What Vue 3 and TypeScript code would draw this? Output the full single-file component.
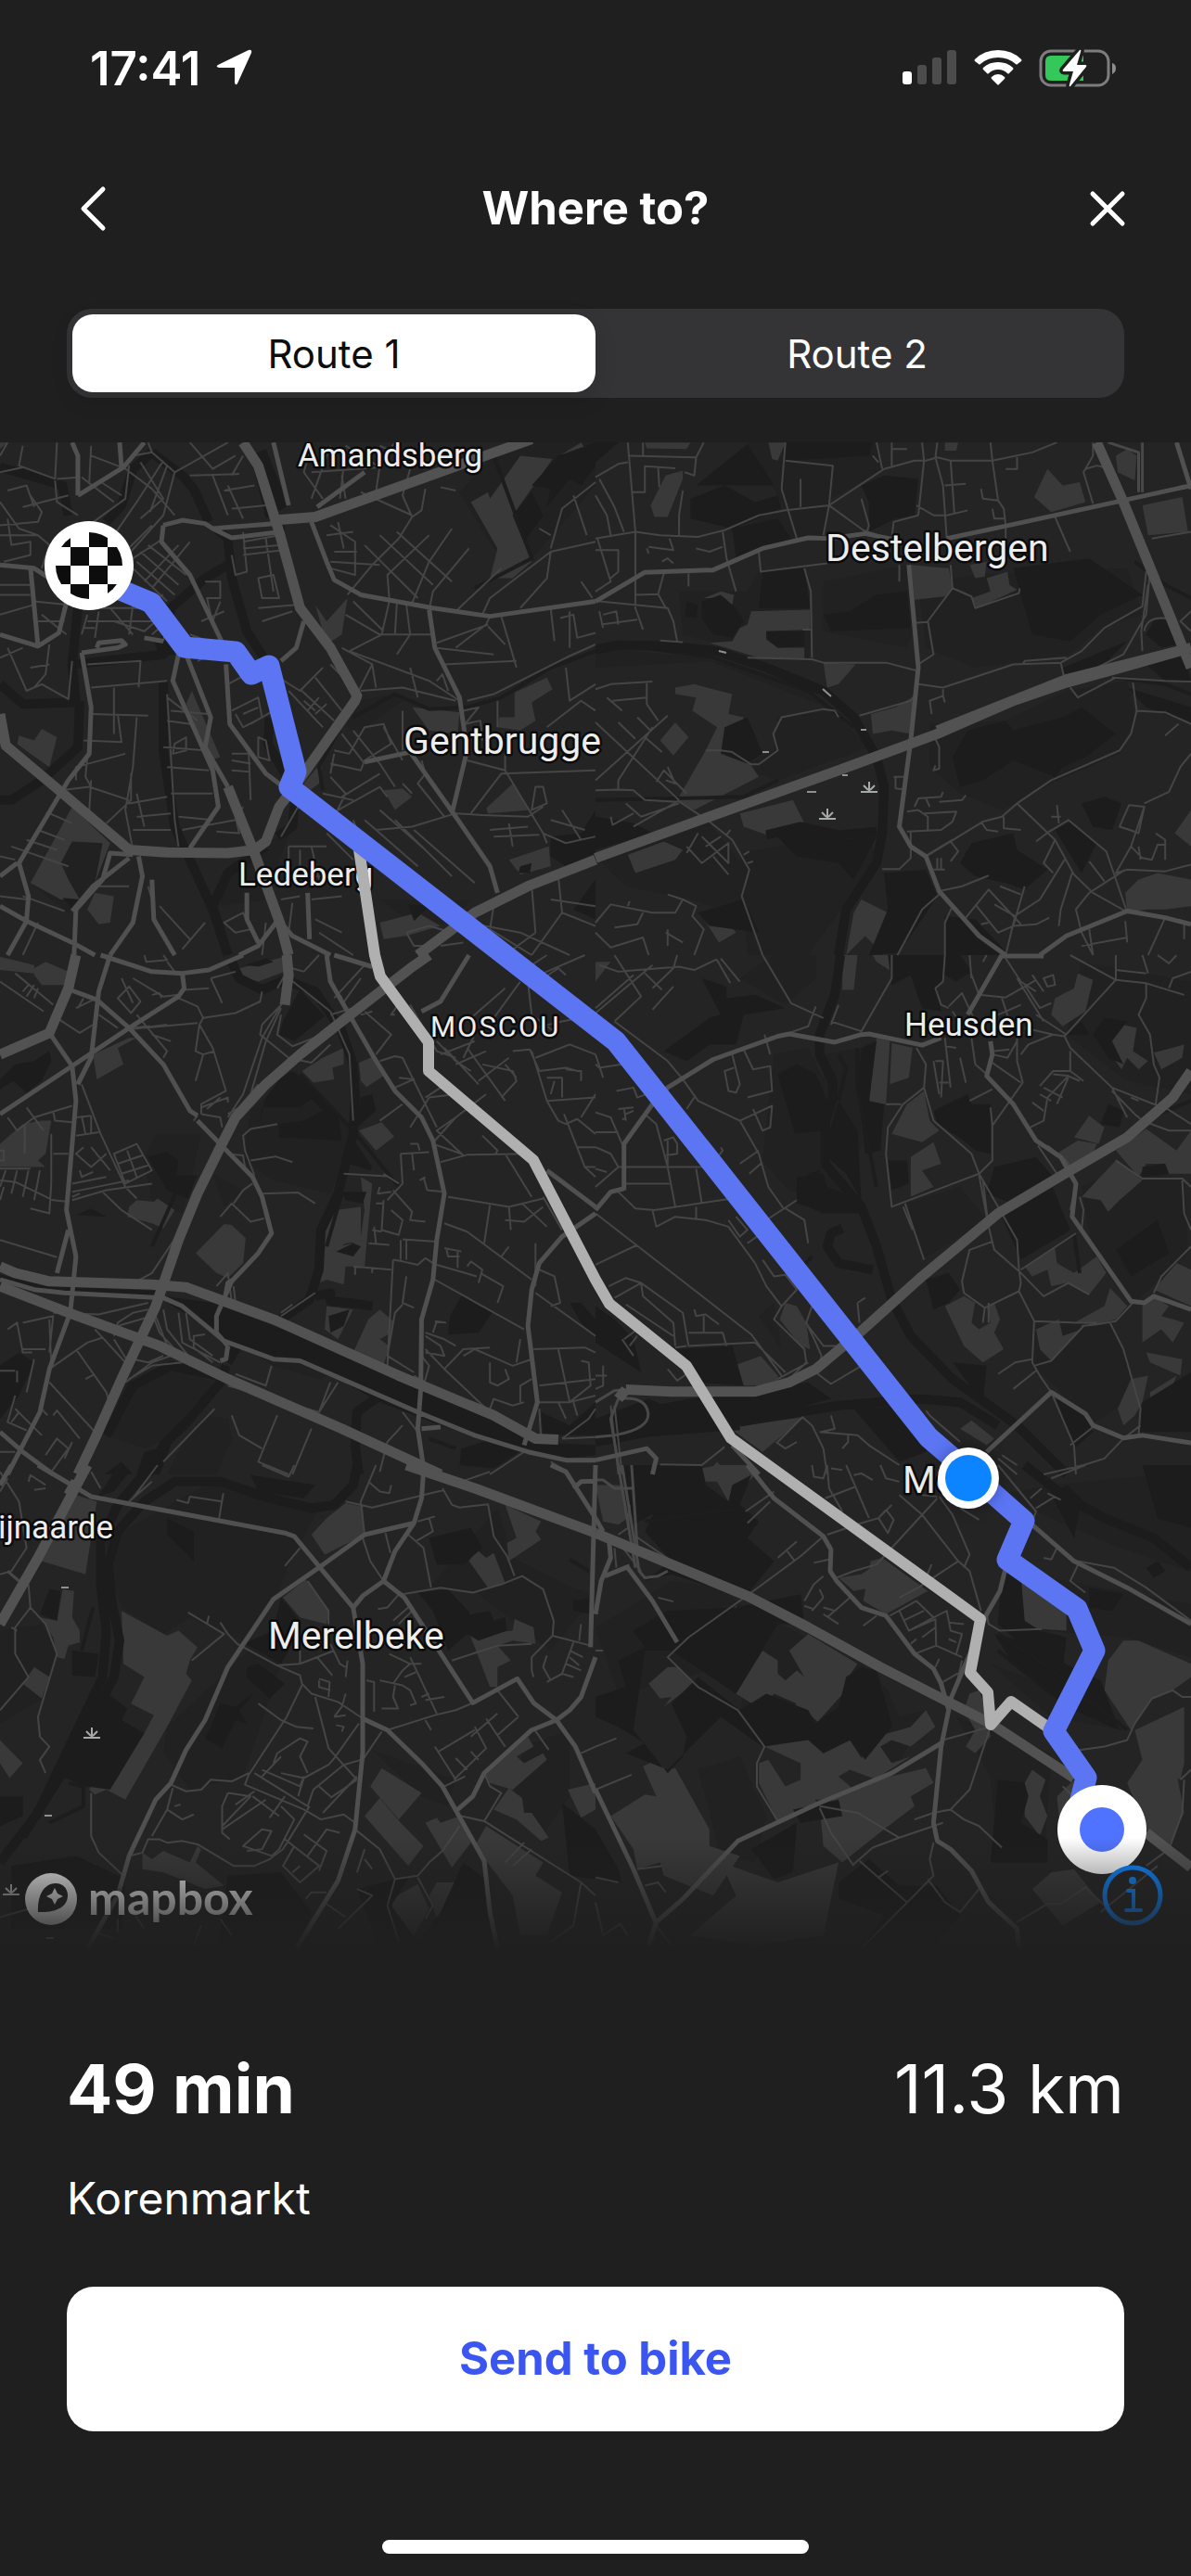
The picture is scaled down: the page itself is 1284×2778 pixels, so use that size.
<script setup lang="ts">
import { ref } from 'vue'

interface Tile {
  x: number
  y: number
  shade: string
  dark: string
  light: string
  river: string
  canal: string
  wide: string
  main: string
  mid: string
  minor: string
}

interface Place {
  name: string
  x: number
  y: number
  size: 'town' | 'village' | 'quarter'
  anchor?: 'start' | 'end'
}

const routes = ['Route 1', 'Route 2']
const selected = ref(0)

// Every tile covers 642 x 560 map units and is drawn on its own 1568 x 1568 grid.
const tiles: Tile[] = [
  {
    x: 0,
    y: 470,
    shade:
      'M1210 170L1300 60 1400 20H1568V150L1400 370 1300 340ZM80 1350L190 1120 290 1230 260 1350 180 1440ZM940 800L1040 780 1060 800 950 890 910 880ZM610 1290L700 1240 780 1150 740 1270 700 1400 580 1420ZM1000 1400L1240 1405 1160 1480 1060 1450Z',
    dark:
      'M1470 60L1568 20V90L1530 150 1500 130 1440 215 1450 160 1400 150ZM1350 240L1400 170 1430 240 1380 320ZM1450 1210L1530 1200 1568 1130V1260L1490 1300 1450 1270ZM1568 1340V1460L1510 1430ZM165 1395L210 1400 190 1425ZM1370 1300L1400 1290 1395 1320 1365 1320ZM1075 1415L1130 1420 1090 1465ZM730 265L750 270 750 290 730 290ZM405 620L445 630 465 660 420 665ZM700 40L760 210 700 250 660 60Z',
    light:
      'M1370 60L1455 70 1350 240 1400 380 1350 430 1290 430 1310 340 1240 200 1285 170 1290 190ZM1480 55L1530 20 1555 60 1500 110ZM490 810L505 770 580 970 550 980ZM50 905L90 920 110 885 150 910 130 1000 80 960 45 930ZM830 510L860 560 915 490 900 600 860 630ZM1085 820L1210 835 1205 900 1130 890ZM1355 775L1440 730 1455 765 1400 805 1410 860 1370 890 1310 880 1315 850 1355 850ZM1280 1125L1350 1050 1395 1130 1285 1140ZM1010 1070L1060 1065 1085 1090 1040 1130ZM1340 1280L1445 1240 1450 1300 1370 1325ZM190 1120L290 1230 250 1350 270 1230 190 1225 160 1290 180 1340 210 1400 160 1400 80 1350ZM250 1380L300 1390 290 1470 260 1475 230 1430ZM1000 1470L1100 1440 1160 1480 1070 1510 1010 1520ZM800 1050L850 980 840 1050 810 1075ZM0 20H20L0 40ZM1305 265L1330 290 1320 350Z',
    river:
      'M0 95L80 120 165 150 180 240M0 750L60 810 200 805 190 690 205 520M210 800L205 940 110 1040 30 1100 0 1100M190 690L430 660 450 520 540 430 600 390M570 280L600 310 610 430 650 590 700 680M710 850L705 930 770 1060M400 50L350 100 320 210 280 260M400 50L480 120 510 160 550 260M430 740L430 950 460 1180 560 1430 600 1568M600 1568L560 1420 600 1320 700 1240M780 1060L770 1180 730 1210',
    canal:
      'M930 850L1040 780 1130 825 1230 820 1320 790 1450 700 1568 650M1300 60L1400 370 1250 460M850 1070L840 1000 900 870',
    wide:
      'M0 840L15 935 150 1065 340 1250 440 1258 600 1260 670 1250 700 1225 735 1120 775 1060 935 800 940 785 870 640 790 520 735 290 680 90 640 20M720 255L830 245 1290 55 1400 10M600 1060L670 1260 740 1480 760 1568M1100 1568L1250 1440 1390 1360 1568 1280',
    main:
      'M0 390L90 400 130 430M80 395L100 635 0 600M100 635L155 595 180 480M205 180L325 95 380 20M205 180L205 60 190 20M315 20L320 95M430 270L480 255 540 265 560 280 720 265M430 270L425 320 500 420 600 660M560 280L610 308 740 290M820 260L860 380 880 435 950 480 1140 520 1290 545 1568 500M720 20L760 210M835 215L960 110M1130 525L1145 640 1210 790 1230 950 1190 1140M960 985L1080 955 1200 1150 1290 1300 1310 1380M490 660L555 850 540 940 600 1060M595 690L605 870 700 1020 740 1055M470 660L455 740 560 1010 575 1120 500 1245M215 655L310 640 330 630 320 618 260 625 255 640M215 655L240 820 235 960 180 1040 50 1290 75 1390 70 1460M350 1265L290 1260 270 1340 200 1430 195 1568M340 1275L245 1360 190 1435M365 1270L375 1330 350 1470 290 1568M400 1340L405 1460 460 1568M0 1420L70 1465 190 1530 250 1568M70 1465L20 1568M0 1330L45 1290M740 1470L770 1510 870 1568M740 1450L680 1540 630 1568M800 560L780 640 740 680M810 1380L815 1520M650 1380L650 1460 680 1530M380 610L430 620',
    mid: '',
    minor:
      'M60 30L50 90 145 130 150 20M0 110L60 95M150 130L205 125M145 135L150 200 205 240M60 215L180 180M20 165L70 150 90 215M240 30L235 140M240 60L320 95M215 125L300 200M260 135L320 180M350 60L400 50 460 110 600 20M325 95L400 160 460 240M400 50L390 20M340 90L330 190 210 290M370 80L430 190 370 250M430 75L360 200 300 300M440 90L395 230M460 110L430 240 290 420M500 20L560 100 620 60M500 120L630 115M560 120L600 240M600 150L640 250M590 165L670 150M610 220L700 210M640 60L610 120M640 290L650 410 620 420 610 360M640 320L735 300M640 340L740 330M640 360L745 345M700 310L720 470M680 430L720 420 735 490 690 490ZM690 560L770 530M680 520L780 510M820 30L800 110 850 190M870 30L820 190M910 40L895 190M820 110L1000 95 910 30M1000 30L1100 80M1000 90L990 170M900 120L910 190M1040 20L1000 80M1080 100L1060 180 1085 245M1120 160L1110 225 1085 245 1050 310 980 390 915 480M1160 155L1200 165M1085 240L950 170M870 270L935 320 935 420 870 400M860 300L930 290M890 260L905 340M880 350L940 350M870 380L1000 390M960 330L1100 490M1000 300L1140 450M1045 290L1190 440M1130 300L1020 420 1025 490M1190 280L1130 380 1085 505M1235 340L1140 470 1130 525M1320 400L1200 530M1450 350L1290 490 1270 540M1450 350L1568 320M1450 340L1480 220 1568 140M1420 280L1450 300M1450 350L1440 430 1370 520M1510 180L1545 300M1530 440L1560 490M1450 520L1460 620M1475 550L1510 540 1520 610 1568 595M1500 530L1500 640M1320 545L1360 700M1290 545L1280 570 1200 640M1285 575L1330 630M1150 625L1285 570M1145 640L1300 660M1170 690L1360 680M1025 500L1005 600 920 650M1070 510L1080 600 1045 660M1045 505L1040 600M910 540L1000 600 1140 600M930 500L1010 590M920 650L1130 740 1210 800M980 690L990 760M950 770L1060 760 1200 800M900 640L980 690 940 780M1100 790L1080 700M1150 740L1165 720 1180 770M1230 800L1300 780 1490 670M1490 670L1568 630M1490 700L1500 800 1568 750M1310 800L1310 880M1440 880L1530 800 1568 830M1220 830L1260 820 1225 870 1265 860 1270 920M0 60L20 20M0 200L50 280 100 300M20 250L30 330 80 320 80 360 10 380M0 270L100 260 110 230 80 180M0 300H100M100 300L130 330 110 400M80 450H0M0 480L80 480M90 510L0 540M100 560L170 560M90 500L180 510M110 540L175 600M230 520H430M230 560L400 560M220 580H250M230 540L215 600M260 530L250 610M350 510L340 600M290 520L350 600M320 440L400 500 430 480M300 560L380 590 410 560M350 400L440 500M360 380L460 480M370 350L470 450M390 330L490 420M400 460L500 320M380 440L470 330M350 370L430 310M330 350L400 270M400 600L440 560 430 620M0 670L60 640M20 640L70 770 110 750 180 795 190 680M60 620L100 640M130 630L120 720 90 760M80 700L130 690M240 760L440 740M230 690L370 680 365 760M240 840L390 845M220 920L320 925 310 840M240 850L225 1030 240 1060M300 760L300 900M360 850L350 1000 330 1130 350 1250M345 1020L345 1100 280 1170M340 1110L440 1090M360 1080L380 1180M360 1150L450 1140M350 1190L450 1190M240 1040L235 1130M160 1070L235 1060 340 1100M200 1040L200 1000 330 960M440 780L460 1160 470 1240M440 790L520 860M450 830L550 840M460 930L490 910 490 950 455 960ZM440 860L500 870M430 940L540 950M440 1000L550 1010M450 1080L560 1080M470 1150L560 1160M480 1190L620 1160 640 1120M620 1150L630 1200 570 1195M610 830L680 790 690 850 640 880 620 840M640 840L680 820M650 720L600 750M660 870L720 830M680 910L700 920 710 980 680 970ZM610 960L655 960 660 1100M610 980L660 990M610 1010L660 1015M700 690L720 670M720 720L790 770 850 700M760 770L850 880M790 765L880 860M830 730L900 830M870 690L930 760M800 800L830 830M810 830L840 790M830 840L860 810M880 950L920 960 960 880 1010 870 1030 930 960 980M900 900L960 990M930 890L1000 990M870 1020L880 960M870 990L950 1010 960 980M870 1030L910 1080 880 1150M900 1090L1000 1020M890 1130L1000 1060 1020 1090M930 1160L960 1250 910 1230M960 1160L1100 1300M1000 1130L1120 1250M1040 1160L1190 1330M1090 1190L1250 1350M990 1190L1085 1180 1200 1140M1010 880L1060 980M1060 830L1060 950M1110 980L1120 1020 1100 1050 1170 1150M1060 1050L1085 1080M1000 990L1040 1060M1230 980L1330 1010 1330 960M1330 1010L1430 1200 1440 1230M1200 1140L1270 1145 1390 1150 1430 1120M1240 1140L1320 1020 1568 1010M1410 1060L1400 1130 1440 1110 1430 1060ZM1290 1190L1390 1180M1300 1210L1420 1205M1340 1170L1350 1240M1430 1200L1490 1230 1568 1210M1450 1160L1540 1190M1480 1130L1530 1220M760 1240H860M760 1240L760 1330 850 1330M790 1250L790 1330M820 1240L840 1340M740 1210L800 1090M860 1200L930 1280M850 1080L930 1100M590 1470L640 1440 660 1490 620 1500ZM480 1550L540 1470M420 1420L500 1520M0 1270L40 1280M30 1240L180 1300M70 1220L150 1250M100 1190L170 1220M130 1140L190 1170M60 1390L170 1435M100 1470L60 1568M70 1400L0 1390M250 1360L340 1360M390 1360L400 1400M700 1470L690 1568M740 1400L790 1390M770 1410L760 1500M830 1460L900 1500M820 1400L900 1390M840 1500L930 1568M1070 1500L1130 1480 1190 1500 1150 1540 1090 1540 1070 1500M1160 1540L1220 1530M1230 1470L1370 1500 1500 1568M1300 1420L1290 1490 1400 1568M1400 1360L1410 1500 1330 1568M1470 1330L1480 1440 1400 1568M1450 1400L1568 1420M1480 1440L1568 1480M540 440L580 440 580 490 545 490 555 540M580 500L560 560M500 600L600 640M530 560L590 530M520 680L600 640 640 680',
  },
  {
    x: 642,
    y: 470,
    shade:
      'M430 410L550 400 570 570 560 680 430 670 300 620 230 600 220 470 400 470ZM600 440L820 390 840 570 820 640 600 590ZM850 450L1000 420 1400 400 1440 540 1330 580 1250 660 1000 700 870 640ZM880 870L1080 860 1240 770 1400 740 1420 850 1380 960 1200 1050 1070 1130 960 1080 880 1000ZM0 640L280 670 560 760 720 940 480 1040 390 1000 470 950 480 850 630 830 500 770 300 680 0 700ZM380 1260L680 1200 720 1180 740 1300 640 1440 560 1568 400 1568ZM0 1270L300 1170 390 1300 380 1450 250 1400 80 1360ZM400 20L740 20 760 100 620 190 600 300 440 330 340 280 500 220Z',
    dark:
      'M265 150L400 25 470 150ZM280 500L330 480 370 520 390 560 360 610 310 600 280 550ZM240 500L270 510 265 550 235 545ZM700 150L760 120 850 130 840 240 790 250 720 290 720 200ZM500 20H730L720 60 500 75ZM440 410L550 400 565 520 430 520ZM450 590L550 590 550 635 480 640 450 610ZM600 540L670 530 740 480 820 470 830 580 620 590ZM940 970L980 890 1080 860 1100 890 1230 850 1280 820 1370 900 1290 970 1230 1000 1210 1030 1100 980 1020 1040 960 1060ZM1450 600L1470 560 1510 550 1530 630 1490 640ZM1450 690L1550 660 1568 740 1500 740ZM1100 400L1300 370 1440 480 1330 540 1250 620 1150 600ZM1230 700L1400 620 1330 700 1240 730ZM470 1200L560 1180 650 1220 740 1210 680 1340 640 1290 530 1270ZM0 1150L100 1170 150 1200 0 1250ZM990 1230L1100 1200 1110 1250 1190 1310 1130 1370 1080 1350 1000 1330 960 1290ZM1210 1190L1250 1165 1320 1230 1280 1320ZM1280 1110L1340 1090 1385 1110 1360 1190 1310 1180ZM270 1440L390 1400 430 1500 300 1480ZM760 1320L870 1310 900 1390 800 1560 720 1568 770 1430ZM400 850L340 880 330 960 400 990 440 960ZM250 190L340 150 420 200 480 180 490 220 360 280 250 250ZM360 280L480 250 520 320 430 350 370 370ZM920 1450L1000 1460 1090 1568 920 1568ZM1400 760L1568 820V870L1450 820ZM0 20H60L0 80Z',
    light:
      'M185 120L230 105 230 130 190 245 155 245 145 210ZM130 20H250L240 40 135 38ZM455 20H500L480 75 465 70ZM285 490L330 470 365 480 360 510 330 490ZM410 530L565 525 565 585 450 590 450 615 480 640 550 640 550 675 430 670 300 625 360 620 380 580 400 570ZM600 685L685 690 640 750 610 760ZM725 840L790 820 840 785 830 900 780 890 730 900ZM210 760L260 750 360 780 350 840 390 850 360 950 290 950 320 880 255 830 265 790 210 780ZM170 920L210 865 245 910 205 965ZM290 950L360 955 410 995 430 1030 260 1130 215 1100ZM380 1140L520 1100 550 1170 450 1205 390 1180ZM85 1265L180 1225 230 1250 210 1280 105 1320ZM275 1440L320 1425 370 1500 325 1530ZM700 1400L770 1440 760 1568 710 1510 660 1568 680 1440ZM1155 185L1190 100 1230 150 1275 140 1290 200 1200 230ZM1440 210L1545 185 1560 290 1455 300ZM1370 60L1400 40 1425 60 1420 135 1375 110ZM830 390L930 400 940 460 920 485 840 495ZM990 490L1040 470 1030 430 1085 410 1090 450 1110 465 1005 520ZM985 390L1030 380 1025 425 1000 430ZM1395 1380L1430 1340 1480 1320 1568 1340V1420L1500 1430 1450 1430 1400 1440ZM1525 1200L1568 1130V1240ZM920 20H955L950 45H920Z',
    river:
      'M0 645L60 632 200 635 320 650 450 700 600 770 680 850 740 970 760 1060 755 1200 740 1290 660 1430 640 1568M450 1205L540 1180 640 1205 740 1195',
    canal:
      'M130 640L310 670 560 770 680 880M0 1100L390 1090 480 1040M1420 380L1500 450 1568 490M1370 730L1500 750 1568 780',
    wide:
      'M1320 20L1390 200 1568 700M0 1275L300 1150 640 1010 900 900 1100 800 1240 745 1400 695 1568 640M1568 640L1240 735 900 890',
    main:
      'M0 500L130 412 310 405 440 340 560 308 620 310 710 295 780 312M925 310L1090 270 1390 195 1568 150M1530 20L1568 160M825 390L850 700 830 920 800 1180 830 1240 870 1270 905 1375 1010 1510 1080 1568M1170 1568L1240 1510 1400 1435 1500 1455 1568 1475',
    mid:
      'M1440 20V170M1350 20L1430 50 1430 170',
    minor:
      'M85 20L105 290 105 520 125 585M85 60L265 65 285 20M265 65L260 120 235 110M0 125L60 85 85 80M10 130L50 215 75 290M0 180L30 240 40 300M125 20V60M165 95L168 155M130 90V170H95M130 92L210 98M230 165L220 240 220 300M0 310L105 290 170 300 270 305 340 285 430 240 500 225 615 210 760 100 840 75 870 75 900 65 935 75 1045 75 1150 50 1215 20M500 20L490 160 530 310M500 75L625 90 615 210M540 130V215M600 300L615 210 705 285 770 310M700 190L720 270 715 290M740 20L755 100M730 60L745 80M780 20V90M780 40H820M860 20L865 75 850 240M900 20L895 65 915 150 925 310M920 150L975 145M935 75L945 235M845 210L890 240 925 240 980 225M780 310L785 260 850 240M1040 20L1045 75 1060 195 1075 220 1080 270M1080 100H1110V60M1015 160L1020 190 1060 195M1045 220L1050 250H1080M1080 275V310M1210 245L1250 350M1310 20V60L1285 110 1310 205M1290 100L1320 90 1340 95M335 290L345 370 370 470M430 350L435 410 610 385M550 400L567 470 570 670M545 585H570M400 670L570 675 600 685 765 685 848 710M800 390V440M935 390L940 460 990 485 1000 520 1115 475 1117 460M940 460L875 560 890 660 850 690M840 565L875 562M850 750L915 760 1100 690 1225 685 1280 650 1340 580 1440 515 1450 410M1125 690L1130 680 1240 670M1225 685L1235 735M1460 410L1450 540 1390 660 1250 740M1440 650L1437 590 1455 450M1415 745L1425 830 1500 835 1568 870M1425 830L1410 900 1380 950 1200 1040 1110 1110 1070 1150 1020 1165 870 1270M1500 905L1535 870M1568 530L1540 560 1568 590M1370 730L1270 790 1250 760M1360 730L1500 740 1568 742M1465 310L1568 290M1445 590Q1450 550 1490 550T1530 600M15 570L110 555M10 500L190 520 205 560 215 620M170 618L230 623M105 480L165 478 185 520M165 478L180 415M245 415V455M10 530L20 580M20 540L55 530 60 570M5 310L40 440 0 470M0 345H60L60 410 40 430M135 340L140 355M140 335L205 345 195 310M175 380L190 370 205 385M265 340L300 350 335 335M0 765L40 750 150 742M135 742V810L165 860M45 800L135 790M30 790L70 830M0 865L220 1100M60 865L105 915M110 850L145 890M190 845L0 1040M130 910L175 955M150 880L60 1040 60 1065M0 1070L60 1068 100 1070 130 1100 215 1105M160 1045L180 1010 240 1080M190 1000L210 1050 185 1040M215 1100L300 1165 360 1220 405 1310 385 1390 440 1568M100 1180L215 1105M40 1150L45 1175 100 1140M80 1110L120 1150 220 1110M270 1200L240 1260M280 1210L350 1290 350 1230 280 1290 240 1240M310 1270L350 1325M290 1240L330 1210M345 1205L355 1190M390 1265L405 1255M400 1290L415 1285M0 1470L40 1415 150 1440 210 1440 230 1400 190 1385M85 1420L90 1405M50 1485L110 1475 125 1440M230 1400L265 1420 255 1450 285 1490 260 1568M185 1500L230 1530M190 1490L190 1540M0 1500L40 1545 125 1515 140 1568M290 950L330 950 360 955 410 992 430 992 480 950 468 900 490 850 600 825 630 830 640 850M695 845L830 800 843 780M885 840L880 800 915 785 920 805M915 765V790M895 915L905 940V1005L890 1010 895 995M785 1030H815M790 1030V1065L815 1068M820 1135L850 1130 875 1150V1190M840 1120L850 1095 910 1090 915 1075M870 1095L880 1120M905 1105L965 1100 975 1085M865 1140L950 1135 940 1165 910 1190 820 1195M830 1195V1275L800 1308H755M935 1225L955 1255 935 1285M870 1268L940 1220M890 1310H920M900 1275V1310M910 1275V1310M1110 1110L1210 1220 1180 1290 1205 1320M1195 1195L1245 1160 1345 1255 1400 1440M1215 1115L1220 1170M1200 1150H1225M1160 1225L1200 1190M1210 1220L1260 1325 1310 1380 1395 1435M1235 1280L1170 1400 1110 1445M1255 1320L1225 1430 1220 1480M1395 1310L1300 1380 1265 1430 1280 1500 1310 1568M1300 1285L1340 1345M905 1375L965 1360 1035 1328M975 1455L1035 1370 1120 1475M1050 1415L1105 1450M1000 1415L1060 1500 1100 1480 1130 1360M1065 1360L1120 1385M1080 1568L1105 1450M1100 1480L1160 1475 1195 1455M910 1380L860 1430 795 1568M940 1420L920 1470V1568M1015 1475L1035 1470M1380 1180L1405 1115 1445 1120 1430 1200ZM1380 1180L1420 1195M1445 1110L1510 1075 1540 1000 1568 960M1445 1120L1410 1240 1370 1320 1400 1310 1500 1315 1568 1295M1410 1240L1440 1275 1465 1280 1480 1235H1500L1500 1280M1475 1200L1500 1220V1240M1430 1240L1435 1280M1280 1540L1400 1515M1300 1490L1310 1568M1395 1465L1400 1530M1500 1455L1455 1568M1550 1470V1520M1015 1165L1030 1190 1060 1195M1075 1150L1075 1185 1120 1190',
  },
  {
    x: 0,
    y: 1030,
    shade:
      'M410 540L530 540 500 690 480 780 400 740 380 620ZM660 470L780 350 930 540 870 720 720 680 640 620ZM560 660L640 710 590 760ZM540 1390L600 1400 610 1460 570 1568 440 1568 470 1500ZM320 1300L460 1240 560 1290 500 1430 380 1490 280 1450ZM640 1180L700 1150 800 1200 900 1260 840 1280 720 1240Z',
    dark:
      'M770 350L890 480 900 560 735 550 735 510 800 500 850 470 820 435 790 460 690 460 680 515 700 430 740 370ZM745 200L790 105 855 185 775 260 735 240ZM390 610L440 595 470 620 465 665 520 665 495 735 440 710ZM0 375L40 330 90 320 130 290 135 320 110 380 70 415 35 380 0 405ZM950 430L980 420 990 470 940 520ZM915 600L935 565 980 640 975 650 920 630ZM200 785L240 765 280 790ZM430 1030L560 1050 860 1180 1120 1310 1300 1400 1400 1470 1568 1480V1510L1480 1520 1390 1490 1160 1420 1000 1350 800 1220 700 1220 600 1170 500 1090 440 1050ZM590 1090L700 1110 850 1180 900 1270 730 1160 690 1155 650 1170 600 1160ZM1185 1090L1215 1030 1295 1080 1260 1140 1180 1145ZM1215 1490L1300 1460 1380 1490 1300 1550 1210 1540ZM1425 1380L1500 1420 1568 1350V1450L1430 1450ZM1500 1050L1530 1050 1568 1100V1150L1530 1110ZM0 1240L50 1200 90 1230 50 1330 0 1400ZM380 1500L450 1480 420 1568H360ZM865 1090L920 1070 905 1120 870 1140ZM900 715H965L955 750 910 740ZM885 895L930 870 950 880 930 910ZM275 1568L320 1530 350 1568ZM645 30L700 10 720 20 680 35ZM0 965L140 1000 430 1015 420 1035 180 1020 0 990Z',
    light:
      'M90 40L120 20 180 50 180 90 110 90 90 60ZM245 300L340 250 360 250 310 280 325 330 255 375ZM0 570L60 510 110 500 135 500 120 600 100 620 120 640H0ZM340 760L360 740 405 745 415 735 460 770 430 825 400 810 335 790ZM515 900L590 812 610 815 647 855 640 930 600 975 570 960ZM795 350L850 310 905 280 905 330 875 340 880 375 825 385ZM945 325L985 305 1010 365 965 398 950 380ZM945 530L1005 505 1038 548 990 590ZM950 670L980 690 960 940 910 940 905 995 860 980 840 990 850 890 930 870 950 850 960 770ZM1000 1070L1035 1105 1030 1140 1000 1160 1025 1180 1010 1240 930 1200 970 1100ZM860 1060L930 1070 890 1160 855 1130ZM630 40L750 5 750 50 680 80 640 70ZM885 770L950 760 950 865 910 870 860 910 850 850ZM0 5L90 30 90 55 0 45Z',
    river:
      'M610 20L630 70 690 105 750 75 830 110 900 230 930 330 935 430 930 540 890 720 845 830 840 950 815 1040 740 1100M595 1240L580 1290 500 1400 430 1480 390 1568M1000 1330L940 1380 935 1480 945 1568M600 1090L630 1170 600 1230M830 1030L870 1020 870 1045 920 1050 980 1060M280 1450L350 1300 450 1240 570 1270',
    canal:
      'M900 720L860 880M790 360L930 530 1050 700M470 700L400 880M1130 1460L1200 1490',
    wide:
      'M1130 0L1080 40 900 200 790 300 700 390 620 490 580 580 520 720 470 860 410 1060 320 1280 250 1460 205 1568M0 1000L180 1080 420 1180 600 1280 900 1430 1160 1568M0 300L130 235 180 100 200 0M750 150L760 60 755 0M0 940L40 960 130 985 400 995 490 1003 720 1100 1050 1270 1300 1390 1410 1460 1470 1463',
    main:
      'M265 0L400 50 480 55 550 45 640 0M0 480L340 220 470 125 485 100 480 55M130 235L190 335 200 440 175 770 200 910 185 1080 130 1250 105 1380 20 1568M185 105L255 135 340 220 430 330 500 470 520 485M520 500L575 565 665 670 690 730 715 840 680 900 610 985 570 1090 570 1140 600 1180M290 0L260 110 240 310 205 390M180 830L150 960M0 980L90 1010 170 1020 430 1035 480 1060 590 1165 720 1220 790 1225 900 1280 1100 1380 1250 1450 1390 1500 1490 1525 1568 1525M860 0L870 80 930 200 985 310 1040 410 1110 490 1140 560 1170 720 1150 860 1140 980 1110 1100 1108 1310 1100 1430 1118 1568M880 0L980 35M1110 170L1160 140 1235 0M1440 650L1568 760M1568 780L1480 850 1420 930 1400 1010 1390 1120 1415 1350 1380 1480M600 1180L595 1220 580 1225M0 1440L60 1500 140 1568M1110 1430L1160 1425M590 1050L600 990 615 980',
    mid: '',
    minor:
      'M0 80L115 170M40 55L140 150M75 90L60 110M90 90L70 125M100 100L90 130M150 190L210 235 245 210M255 130L200 160M220 130L205 160M380 0L385 20 440 15 430 0M440 20L460 50M310 130L340 95 370 140 345 175ZM320 70L350 145M350 70L430 125 470 120M400 120L420 115 425 130M485 105L550 100M470 130L520 155 535 190 620 175 685 140 690 110M555 70L620 50M555 70L585 145M535 190L525 210 515 290 535 300 565 290M525 210L560 280 595 410 530 450 530 480M535 300L515 380M380 220L520 205M340 220L395 215M340 225L440 210M360 180L440 290 430 310M400 240L450 260M260 180L310 220M200 390L240 300M215 390L265 540 330 700 360 735M20 490L45 530 90 490 190 455M70 460L115 530M140 470L145 500 190 505M215 485L225 540M240 485L240 540M200 490L240 485M200 545L260 535M65 510V600M0 590H10V620H0M0 645H80M15 650L0 700M45 650L30 720M75 650L60 730M105 650L90 740M0 680L40 685 140 740 180 745M135 540V690L130 780 80 765M140 600H180M0 740L10 700M220 580L200 600 240 640 280 600M210 650L215 670 245 655M240 580L290 650M300 600L360 570 400 650 330 690ZM310 630L375 605M320 660L390 635M335 590L360 670M190 690L280 670M190 715L340 680M190 740L280 710 400 690M210 720L190 730M270 715L320 770 400 830M0 860L150 912M360 985L400 960 470 840M530 460L600 430 600 445M545 465L580 430M530 480L580 490 585 520M520 485L510 500M600 480L630 460 680 390M750 130L690 250 640 420 600 490M740 160L700 260 660 420M740 180L730 240 770 275 850 240M690 210L685 240 760 310 820 325 870 270M690 210L740 150M730 100L750 60 870 170 920 300 930 500M730 510L660 525 640 545 645 590 670 665M600 600L640 605 645 640M660 620L725 608 770 625M690 720L785 717 830 750M695 795L660 805 610 750 580 790M615 750L640 710 665 690M610 1045L600 960 570 1000M615 1000L620 1050M800 50L770 40M800 50L840 0M870 80L900 130M880 130L960 30M900 150L950 70M870 180L930 160M960 170L1030 240 990 300M950 180L980 170M1000 320L1040 305 1060 310 1150 520M1050 370L1090 375 1040 400M1130 430L1200 420M1120 430L1160 400M1060 450L1000 500M1080 520L1130 430M1145 560L1200 490 1280 420M1200 490L1150 530 1220 605M1140 570L1215 600M1160 625L1230 603 1390 600M1330 600L1400 730M1270 545L1310 590 1305 600M1055 600L1130 595M1055 600L1060 690 1020 740M1080 570L1100 570 1105 590M1085 600L1090 650M1105 680L1120 670M1115 670L1125 710 1170 715M1035 710L1085 775 1080 800 1120 805M1000 700L995 720 1030 715M1010 740L1005 830 1050 845 1060 800 1030 770M990 750H1010M980 830L1005 835M985 820L990 870M970 870L1025 875M1060 858L1150 865M1055 860V920M1070 860V920M1035 920L1060 925 1100 935 1120 915 1140 930M1035 920L1020 1240M930 940L1030 950M935 940V965M980 945V960M905 660L1020 668M1050 690L1010 660M1180 730L1340 760 1430 735M1290 755L1275 870M1340 760L1345 830M1330 800L1380 805 1430 760M1170 810L1230 835 1400 980M1170 885L1215 895M1175 885L1180 910H1210M1205 890V945M1150 935L1255 970M1230 940L1240 925 1270 950 1260 990M1265 960L1325 1000 1310 1050M1145 980L1380 1130M1340 880L1320 910M1375 750L1440 820M1430 730L1480 830M1410 870V1000M1420 950L1460 970 1475 1050 1450 1060M1410 1020L1568 1150M1405 1190L1540 1185 1568 1200M1420 1300L1568 1280M1470 1190L1500 1350M1415 1350H1500L1568 1330M1530 1225L1550 1230 1555 1300 1500 1350M1470 1350L1490 1400M1510 1350L1520 1390M1420 1370L1425 1470M1480 1460L1568 1455M1480 1460L1550 1400 1568 1370M1070 970L1060 1050 1090 1065M1060 1055L1040 1080 1020 1210 1090 1260M1120 1140L1170 1160 1200 1180M1150 1105L1140 1140M1145 1105L1175 1110M1120 1190L1170 1250 1290 1380M1170 1250L1220 1190 1290 1185M1220 1210L1250 1190 1290 1210 1350 1240 1400 1220M1290 1230V1290L1310 1300 1340 1280 1330 1250M1370 1160L1360 1230M1400 1280L1370 1300 1370 1350M1290 1370L1300 1340 1350 1360 1380 1350M1110 1210L1130 1240 1115 1300M1120 1200L1170 1210 1160 1180 1120 1150M1060 1380L1100 1440M1060 1420L1020 1470 1000 1560M1380 1500L1290 1568M1450 1530L1480 1550M740 1080L770 1055M750 1110L860 1160M740 1090L830 1020M600 1300L840 1380 890 1290M620 1265L700 1300 715 1240M610 1390L630 1450 690 1490M730 1390L680 1530 760 1568M820 1430L770 1568M565 1370L430 1530M840 1380L870 1290M1090 1270L1120 1290M60 1110L140 1090 130 1200M20 1130L45 1110 60 1200 85 1200M60 1190L120 1190M90 1220L70 1320M130 1250L230 1170 270 1155M200 1190L280 1320 285 1340 270 1400M225 1280L250 1265M130 1290L250 1440M40 1330L20 1410 70 1435M40 1370L110 1450M50 1380L30 1410M140 1390L150 1375 210 1460M110 1370L125 1390M120 1510L150 1460 180 1490M130 1568L180 1490M170 1520L190 1470M130 1100L135 1240M140 1080L260 1085 390 1050M250 1130L290 1180 330 1230M300 1150L310 1110 350 1080 390 1070M310 1120L400 1090M300 1160L330 1215 390 1230 430 1210M340 1280L400 1240 480 1230M410 1090L440 1180M400 1080L420 1140 500 1240M430 1070L440 1130 510 1230M470 1080L480 1170 580 1230M490 1080L500 1160 560 1210M540 1145L510 1150 510 1185 560 1230M330 1290L400 1230 450 1210M0 1255H40M45 1255V1290M0 1500L40 1500M1330 330L1360 370M1230 280L1330 440M1170 280L1260 390M1250 260L1160 300M1280 290L1200 330M1260 380L1340 310M1270 330L1350 350 1360 380 1320 430M1150 260L1200 320 1240 350M1220 310L1250 240M1350 290L1395 285 1420 350M1400 290L1440 440 1470 500 1490 510 1520 495 1568 540M1420 350L1490 340 1520 350M1440 370H1480V430M1460 380L1450 420M1490 345L1530 350 1530 380M1440 440L1568 430M1485 480L1540 640 1568 670M1520 580H1568M1300 190L1370 80M1390 80L1400 180 1470 240M1330 100L1230 200M1400 30L1440 0M1430 70L1470 40 1490 60M1420 60L1540 0M1530 490L1568 420M1540 640H1568M1410 220L1480 200 1568 180M1410 310L1500 270 1568 300M1040 180L1030 180 1060 130M1080 150L1150 290 1200 310',
  },
  {
    x: 642,
    y: 1030,
    shade:
      'M470 300L560 280 620 420 600 640 700 780 600 760 500 700 440 620ZM600 300L700 280 700 580 650 640 600 500ZM1280 20L1568 80V420L1400 380 1240 240ZM1160 1120L1300 1100 1360 1110 1430 1330 1300 1420 1210 1300 1150 1240ZM1280 700L1400 640 1550 680 1560 900 1410 1060 1310 900ZM820 750L960 700 1030 800 860 920ZM470 0H580V70L500 150 380 70ZM430 1090L490 1190 470 1050Z',
    dark:
      'M480 360L530 330 580 360 610 440 600 530 525 540ZM280 70L345 95 345 130 420 120 500 160 390 180 370 270 300 270 240 320 180 290 300 190 330 180ZM530 670L600 660 610 700 700 740 710 780 600 780 560 760 530 750ZM890 470L980 420 990 450 1040 450 1040 600 1000 590 970 560 900 510ZM640 440L690 530 700 740 660 660 600 600ZM700 280L740 260 720 440 760 450 750 590 710 600 690 380ZM870 980L930 960 960 1010 930 1050 890 1070ZM1070 790L1200 690 1250 830 1120 920ZM1370 890L1480 800 1510 900 1410 970ZM1350 450L1390 470 1380 520 1330 510ZM1440 640L1500 630 1510 660 1440 670ZM770 0H960L990 50 950 80 920 60 900 100 910 170 860 160 830 60 780 90ZM0 1060L50 1100 100 1160 120 1260 0 1170ZM210 1190L360 1180 390 1300 270 1290 240 1230ZM300 1330L560 1290 620 1340 370 1420 150 1440 100 1370ZM0 1400L140 1340 200 1370 260 1390 400 1380 180 1440 0 1470ZM680 1370L830 1360 900 1450 870 1500 800 1530ZM940 1230L1030 1240 1020 1350 980 1290ZM1340 190L1400 200 1360 260 1390 330 1350 310 1310 240ZM1050 640L1160 610 1220 690 1120 760 1030 720ZM1210 1330L1290 1390 1310 1440 1260 1490ZM770 620L820 620 825 690 780 710ZM1440 1350L1568 1260V1440H1430ZM560 660L590 650 590 720 550 700ZM1240 240L1280 200 1300 240Z',
    light:
      'M650 0H690L680 105 650 105ZM730 0H790L780 50 740 20ZM740 250L775 260 765 450 720 450ZM780 265L835 280 825 370 775 390ZM780 540L820 450 865 410 880 500 905 530 860 565ZM830 610L890 565 910 630 860 650 890 700 830 730ZM1210 130L1260 100 1270 55 1310 75 1290 170 1230 215 1200 180ZM1335 265L1370 205 1425 220 1415 290 1455 320 1430 345 1400 310 1385 345ZM1470 295L1550 270 1545 310 1490 345ZM1260 550L1300 485 1340 520 1325 570ZM1220 595L1270 560 1320 570 1300 630 1240 640ZM1280 730L1370 620 1440 680 1380 740 1350 775 1330 740ZM1370 590L1450 525 1530 590 1568 530V660L1500 660 1500 630 1450 630 1430 670ZM1130 940L1210 885 1215 930 1260 960 1320 910 1345 960 1300 1025 1240 990 1200 1000 1190 950 1150 970ZM1470 1010L1530 930 1568 950V1060L1510 1030ZM920 1060L970 1030 1000 1050 990 1110 1010 1130 1040 1110 1030 1060 1050 1050 1065 1100 1050 1140 1075 1190 1020 1230 970 1180ZM1260 1110L1340 1060 1355 1005 1400 1060 1370 1100 1320 1115ZM1160 1130L1220 1100 1230 1150 1280 1130 1200 1225 1170 1190ZM1440 1060L1470 1030 1510 1060 1490 1090 1550 1110 1520 1170 1490 1130 1440 1170ZM1450 1200L1545 1220 1540 1270 1460 1230ZM1410 1280L1455 1270 1440 1350 1420 1390 1390 1420 1375 1370ZM1460 1320L1530 1270 1510 1330 1460 1350ZM485 1100L500 1050 530 1060 555 1110 565 1190 540 1180ZM365 1240L435 1210 480 1270 480 1300H390ZM350 1425L550 1395 440 1500ZM960 1430L990 1405 1050 1460 1030 1480ZM0 20L40 20 0 80ZM290 1568L320 1530 350 1568Z',
    river:
      'M645 0L630 120 590 240 590 300 625 380 625 430 605 500 605 630 700 760 740 880 780 1040 830 1150 940 1280 1110 1420 1240 1568M730 950L640 930 610 880 620 840 650 825M380 1410L640 1360 850 1340 960 1350 1060 1420M0 1470L140 1440 380 1420',
    canal:
      'M640 300L660 340 640 440M690 280L690 400 740 700M570 910L530 960M1440 500L1568 440M1260 840L1275 960',
    wide:
      'M1568 350L1520 430 1400 550 1250 650 1060 780 860 970 700 1135 580 1250 510 1290 420 1318 200 1318 80 1312M80 1312L60 1340',
    main:
      'M1070 0L1000 140 980 180M1070 3L1180 3M75 710L75 570 150 450 190 400 310 315 480 245 510 238 630 263 700 240 720 238 860 272 910 250M1040 260L1045 300 1030 365 1100 450 1160 560 1225 610 1265 690 1255 790 1410 1045 1445 1050 1470 1030 1568 1070M0 770L40 715 75 705M1030 1500L1200 1320 1290 1385 1310 1420 1390 1458 1440 1450 1568 1473M0 1525L135 1490 160 1520 150 1568M360 1480L400 1530 430 1568',
    mid:
      'M60 1340L40 1400 60 1540 75 1568M60 1340Q130 1330 138 1380T50 1450L0 1455M0 1350L50 1315 80 1312',
    minor:
      'M50 0L120 125 50 200M0 175L150 30M10 30L60 50 220 35 260 45 320 12M150 100L205 40 215 0M130 55L175 105M205 95L150 165M100 60L0 160M320 15L355 85M330 10L380 80M440 0L515 145 600 190M580 155L560 215 510 235M780 0V70L700 230 620 200M620 210L640 150M920 0L915 80 895 100 910 150 930 160M990 60L1010 120 1080 128 1160 75M985 0L990 70M1020 20L1030 0M930 155L965 115 1000 200M940 170L960 205M1080 10L1120 80 1160 110M1110 70L1180 200M1130 90L1170 160 1200 145M1150 60L1180 110M1180 70L1205 60 1210 90 1190 95ZM1250 0L1370 75 1310 150 1235 245 1205 240 1130 220M1370 0V75L1450 85 1450 130 1430 180 1460 240 1470 330 1485 370 1475 450M1370 45L1450 55M1440 0L1455 55M1450 85L1550 120M1510 100L1520 70 1568 50M1480 0L1510 25 1530 0M1070 130L1090 200M1120 150L1040 190M1160 180L1240 240M1235 245L1250 280 1360 400 1470 450 1500 460 1568 510M1250 290L1250 350 1205 350 1170 395M1205 360L1245 365 1275 380M1250 350L1285 380M1245 365L1190 430 1180 500 1145 520M1245 370L1215 450M1180 400L1230 430M1170 420L1200 440M1150 445L1180 470M1110 250V320L1125 385 1045 515M1120 300L1140 270 1205 240M1045 300L1085 310 1110 260M1050 290L1090 285M1045 325L1120 385M990 250L1000 330 1030 360M845 280L870 330 865 400 890 500 990 600 1010 660 1045 620 1045 515 1040 460M865 400L810 450 770 520 765 600 780 760 1010 660 1110 860 1115 950 1120 990 1115 1015 1155 1105 1270 1110 1320 1110M810 760L835 830M985 440L1045 405M895 320L915 320 910 430M890 320L905 420M920 250L935 400M905 385H930M960 310L975 385M920 275L950 280M765 450H805M815 750L865 920M1010 665L1030 790M1020 680L1035 820 1050 890 1120 960M1045 865L985 890 965 985 970 1020 1025 1065 1115 1015M1025 1065L1020 1110M1035 1050V1110M1120 960L1180 1030 1245 990 1300 1025M1120 950L1265 840M1265 690L1250 770M1275 730L1285 770 1280 830M1165 575L1215 660M1190 575L1240 620 1250 640M1360 400L1400 490M1360 410L1420 480 1440 500 1510 530H1568M1410 430L1430 440M1370 620L1440 675H1545L1568 700M1545 680L1550 780 1568 830M1568 880L1490 970 1470 1020M1415 1050L1370 1105 1320 1115 1280 1120M1355 1110L1390 1190 1435 1370 1430 1450M1155 1105L1150 1230 1170 1270 1200 1320M1150 1220L1105 1230 1060 1265M1160 1255L1100 1310M1155 1240L1200 1225 1285 1120M1200 1320L1260 1480 1265 1568M1390 1460L1340 1520 1285 1540 1180 1568M1310 1425L1250 1480M1435 1420L1390 1460M0 330L10 340 70 330M0 300L20 370M55 410L100 400 110 430 180 400M60 465L100 460M70 495H80M75 460L80 500M100 470L80 480M0 475L40 490 70 570M0 535H60M0 580L40 600 60 640 0 700M0 645L30 655M60 640H300M75 690H195M190 560V640L210 760M265 645L280 750M130 480L160 510 190 640M180 560L205 550 215 570 215 600 185 605M60 715L105 765 155 770 360 735M150 770L160 820 210 790 290 800 350 820 420 930 450 1000 490 1060 470 1100 550 1190 555 1230 510 1280M265 760V795M50 200L190 320 230 375 270 440 380 500 430 600 455 700 495 765M380 500L465 455 460 520 440 530 415 465M380 630L430 590M405 660L435 630M260 430L240 465M360 300L380 390 370 415 350 410 340 350 365 340M390 285L415 345 460 335 465 410 400 430M445 240L460 300M500 765L550 800 560 870M450 800L530 740M400 870L450 830M350 800L380 850 400 830 370 790M325 605L335 590 330 580M440 920L470 970 500 965 530 1010 490 1060M0 935L110 875M0 780L410 1145 490 1270M35 1000L80 975 120 990 230 1080 245 1180 420 1170M50 1035L120 990 125 1030 205 1110 210 1180M80 1055L205 1150M75 1160L110 1130M70 1160L100 1210M110 1150L90 1180M260 1070L265 1090 290 1085 325 1115M285 1090V1140M245 1140H335L345 1180M210 1185L240 1180M0 1270L30 1270M20 1240V1300L0 1310M190 1250L215 1285 240 1265M420 1170L500 1260M570 1060L555 1110 580 1170 595 1210 590 1240M560 1120L600 1180 640 1180M690 1050L710 1035M690 1050L695 1110M580 1260L620 1295 700 1240M480 1280L560 1230M595 1440L630 1430 620 1390M590 1440L690 1450 720 1480 800 1540M480 1470L545 1395 570 1420 600 1490 610 1568M665 1445V1470L650 1490M475 1470L500 1490 530 1470M870 1375L880 1390 960 1470M170 1538L280 1540 340 1485M40 1360L60 1568M50 1360L70 1568M1060 1520L1110 1568M1070 1510L1110 1540',
  },
  {
    x: 0,
    y: 1580,
    shade:
      'M280 230L400 150 560 50 840 130 760 300 720 420 640 530 500 460 430 510 320 430 290 320ZM440 790L600 620 680 530 740 600 640 940 500 980 430 870ZM0 500L110 480 150 560 120 700 0 780ZM980 860L1200 950 1180 1030 1110 1000ZM1440 350L1568 390V450L1500 440ZM1310 130L1350 280 1560 400 1450 560 1250 380 1130 370ZM1380 850L1500 800 1500 1000 1420 1130 1350 1000Z',
    dark:
      'M640 540L720 500 740 400 790 470 760 560 740 600 680 560ZM650 610L680 600 750 660 710 705 650 640ZM555 790L580 720 620 730 670 685 630 740 650 780 620 770 585 855 540 825ZM285 690L335 735 320 770 380 810 290 980 230 970 160 940 200 860 240 780ZM130 375L160 380 150 470 105 450ZM190 560L260 570 250 640 190 635ZM1100 385L1180 375 1240 450 1290 440 1300 470 1330 460 1335 500 1260 530 1230 510 1180 560 1140 440ZM1510 410L1560 400 1558 450 1510 440ZM1130 220L1240 190 1270 250 1220 300 1150 300ZM440 160L510 200 510 290 440 210ZM660 30L830 60 800 100 680 80ZM600 1240L740 1230 820 1350 760 1568H560ZM940 1280L1080 1240 1030 1330 1100 1440 1160 1350 1220 1200 1290 1260 1300 1460 1000 1460ZM0 1000L60 1000 60 1060 0 1090ZM260 90L320 10 340 20 300 80ZM1480 1020L1568 1100V1250L1500 1240ZM30 1210L200 1180 330 1250 320 1400 30 1400Z',
    light:
      'M95 285L200 90 255 110 225 330ZM165 375L195 380 190 460 210 500 210 535 180 545 170 585 150 580 140 520 105 460 150 470ZM320 440L440 515 470 500 520 550 500 590 490 630 505 650 440 790 330 1010 280 980 250 995 235 980 310 780 380 810 405 755 345 720 380 640 325 600ZM90 610L130 640 110 705 60 660ZM0 830L60 900 25 945 0 900ZM745 400L805 345 865 440 860 480 790 460ZM820 210L860 160 910 115 955 125 960 210 855 270ZM1330 120L1425 170 1410 200 1425 225 1340 290 1335 235 1360 220ZM1235 290L1255 255 1280 280 1300 265 1330 355 1285 370ZM1220 460L1240 445 1260 510 1350 500 1355 465 1405 490 1410 540 1350 530 1310 545 1345 590 1310 610 1310 670 1290 670ZM975 970L1005 915 1110 990 1050 1070ZM960 1060L1000 1005 1055 1080 1115 1150 1075 1210ZM1120 1080L1150 1065 1160 1080 1210 1060 1240 1140 1190 1215ZM1275 940L1390 820 1405 850 1360 880 1380 900 1430 870 1440 890 1350 980 1290 960ZM1300 1040L1340 975 1375 1005 1380 1050 1400 1050 1445 1125 1425 1135 1360 1070ZM1495 980L1568 960V1040L1530 1065ZM1250 1150L1280 1090 1430 1200 1410 1240 1480 1290 1440 1420H1370L1350 1300ZM1150 1260L1200 1260 1290 1280 1280 1440H1170L1130 1300ZM1030 1310L1100 1265 1130 1340 1080 1440 1040 1400ZM375 1170L400 1190 430 1165 500 1200 520 1150 530 1160 515 1200 590 1270 540 1280 430 1230 375 1220Z',
    river:
      'M400 0L310 120 265 230 265 360 280 500 270 640 170 880 100 1050 0 1200M940 0L930 60 880 120 820 130 710 100 580 50 460 50 380 110 310 200 285 300 295 420 315 530 300 640 180 900 60 1120',
    canal:
      'M245 430L215 560M130 1080L220 1030 220 970 180 960M260 100L320 0M1500 285L1550 320',
    wide: 'M230 0L100 280 0 480M1070 0L1250 70 1568 205M200 50L180 90',
    main:
      'M100 0L240 95 750 205 775 215 930 430 955 600 955 870 935 1100 890 1255 780 1460M1115 20L1110 100 1090 175 1040 260 1010 350 955 395 930 430M1090 175L960 210 845 305 720 405 600 610 540 770 490 860 450 960 410 1010 340 1180 310 1300 230 1460M1010 350L1065 400 1245 718 1362 645 1405 718 1465 770 1515 850 1568 990M1465 770L1400 800 1275 930 1245 1000 1205 1040M955 765L1020 800 1110 900 1165 970 1275 1195 1290 1350 1310 1460M1568 0L1555 550M1568 580L1530 700 1500 740 1465 770M1450 0L1490 20 1568 160M1510 70L1530 50 1568 48M0 60L30 0',
    mid: 'M20 320L50 350M75 330L70 360',
    minor:
      'M0 20L50 110 70 250 30 320 0 330M0 80L20 40M75 50L80 30 120 60M90 75L120 70M240 20L265 70M350 100L415 0M340 110L400 50M465 105L495 115 500 95 585 110M588 85L577 160M690 0L760 35 775 0M790 250L750 305M960 210L950 110 990 0M910 110L980 128 1170 75M970 50L1000 80 1025 85 1030 60M955 220L975 290 1010 350M1075 210L1115 250 1135 370M1015 205L1028 265M1100 170L1145 155M1130 160L1140 200 1095 230M1165 70L1190 120 1210 128 1285 118 1300 215 1335 275 1355 335M1060 390L1160 370 1245 385 1320 360 1375 335 1430 375 1458 470 1455 515 1400 580 1400 620 1405 640M1050 390L1020 430 995 435M1075 430L1035 470M1085 440L1050 480M1455 515L1555 545M1510 535L1480 630 1440 655M1500 560L1535 580M1500 580L1525 605M1490 600L1530 620M1480 630L1510 640M1440 575L1430 610 1450 650M1530 480L1525 530M1215 50L1290 20M810 350L865 440V480M495 445L590 510 505 590M550 455L545 480M580 475L600 510 625 540 730 605 790 635 795 660 820 690 890 715 955 765M730 605L790 600 880 560M790 560V600M835 580L875 635M870 540L895 600 910 610M915 590L910 640M840 645L868 655 865 700M840 650V670L870 680M1000 650L1060 665 1080 680 1095 720 1080 725M965 650L985 655V745M1040 665L1035 700 1048 735 1005 735M1035 660L1060 620 1080 600 1110 600M1065 640L1095 625M1080 580L1150 750M1025 570L1080 600M1110 700L1130 690M1120 710L1170 700M1190 590L1310 545 1400 540M1245 718L1200 740 1145 755 1020 800M1120 770L1135 800M955 770L1010 800M955 890L1005 805M1310 680L1365 760M1365 760L1310 815M1280 765L1330 850M1250 790L1280 855 1195 950M1310 750L1240 820M1145 850L1200 950M1155 865L1250 800M1200 885L1230 920M1240 865L1260 890M1170 970L1225 940M1405 795L1445 860M1275 930L1290 970 1320 990 1275 1075 1215 1060M1275 1075L1530 1260M1568 850L1530 870M795 665L755 760 655 935 645 965 800 1040 845 1070 905 1055 935 1080M740 770L780 790 825 795M680 720L740 770M830 700L865 855 940 950M880 760L910 755M910 690L900 730 880 760M885 785L905 790 900 805M945 780L880 885 865 905 800 945 740 930M720 900L730 870 790 825 810 835 790 880 810 930M690 920L790 970 800 940M740 880L690 940M670 930L810 1030 825 980 905 905 950 890M785 1000L800 945M840 970L870 1000M870 1005L940 950M850 1050L940 940M450 965L490 985 530 980 555 950 610 955 655 930M455 975L440 1040 400 1120M440 1040L480 1070 510 1055M460 1030L475 1025M600 990L660 1000 585 1090M600 990L585 1030 585 1110 605 1130M620 1025L670 985M585 1100L700 1010M665 1000L735 1060M710 1065L750 1000M740 1030L775 1070M775 1070L735 1160 715 1180 640 1150 690 1100 715 1105 690 1160 650 1165M815 1030L745 1160 710 1190 670 1210 615 1210 520 1145 480 1135 440 1140 420 1130 390 1130 375 1170 340 1180M800 1115L860 1165 840 1225M810 1180L860 1100 895 1110M750 1130L840 1210 790 1260 745 1210 775 1150M770 1230L790 1210M805 1310L820 1290 860 1290M860 1325L910 1365M240 990L240 1120 260 1170 325 1240M0 740L75 640 40 570 40 490 80 430 75 360M80 430L120 480 150 570 100 760 105 820 130 850 105 890 120 930M30 490L45 500M0 1365L200 1300M250 1410L300 1430M310 1370L310 1410M350 1350L380 1400M580 1370L610 1420M530 1390L510 1450M890 1400L980 1300 940 1280M940 1230L960 1160M960 1190L980 1220M935 1100L1000 1160 1040 1250 1100 1240 1130 1200 1165 1165 1210 1090M1100 1245L1140 1330 1120 1370M1040 1250L1020 1330 1050 1440M1330 1200L1380 1140M1350 1210L1400 1160M1530 1260L1510 1390 1450 1440M1530 1260L1568 1300',
  },
  {
    x: 642,
    y: 1580,
    shade:
      'M0 490L60 450 200 350 330 370 430 470 350 600 210 650 60 690ZM450 460L700 600 770 680 800 760 870 740 800 900 600 860 430 830 380 740ZM1060 90L1200 60 1568 20V320L1380 250ZM1100 320L1568 420V580L1400 520 1180 500ZM1040 600L1250 690 1390 800 1200 760ZM270 920L380 880 450 1060 420 1200 330 1180ZM950 760L1200 870 1180 1200 1060 1200 1040 940Z',
    dark:
      'M170 30L290 60 350 110 360 60 410 30 380 120 430 170 400 220 470 290 400 390 280 360 200 330 130 350 200 290 130 200 160 130ZM60 0H280L290 60 100 180ZM370 430L540 390 550 480 480 480 370 690 200 560 130 560 100 800 190 930 230 880 240 820 200 720 270 640 380 740 450 690 560 740 580 780 640 730 660 640 700 610 740 620 770 740 780 790 710 890 670 830 600 870 560 830 440 850 330 760 190 920 80 870 130 840 60 790 0 760V700L80 670 60 590 130 550 100 500 190 440ZM1050 510L1120 530 1200 580 1330 650 1380 800 1240 730 1100 600ZM1070 320L1120 340 1130 470 1170 500 1240 520 1230 620 1120 540 1060 480ZM1060 950L1130 960 1140 1000 1120 1080 1190 1130 1190 1200 1040 1200ZM1200 90L1240 60 1280 100 1260 220ZM520 1040L640 1010 650 1060 540 1080ZM410 1160L530 1080 520 1230 470 1250ZM0 1100L60 1220 70 1260 0 1240ZM640 1260L720 1190 800 1270 900 1270 960 1360 880 1460H700L760 1360 640 1310ZM1300 370L1390 390 1360 440 1300 430ZM1450 310L1480 290 1500 320 1470 340ZM1568 0V190L1480 160 1440 0Z',
    light:
      'M280 10L320 0H410L420 30 350 110 320 50 290 50ZM245 530L370 425 410 490 295 580ZM370 690L440 560 480 590 480 630 500 650 530 620 550 640 510 560 560 510 690 600 660 650 660 680 585 775 545 735 480 765 530 720 470 690 440 740ZM445 850L560 825 600 870 670 830 700 885 740 820 830 790 870 740 895 790 830 850 780 830 750 850 780 900 830 880 760 930 740 950 670 920 640 940 680 980 630 1010 540 1010 540 900ZM140 660L190 610 220 610 260 660 180 730 200 700 170 705ZM430 900L455 890 500 970 540 950 590 1030 480 1075 430 960ZM125 910L160 890 185 920 210 915 300 1100 300 1150 380 1180 310 1300 180 1240 170 1200 110 1220 100 1160 40 1060 130 995 160 1000ZM740 950L870 915 890 960 830 1000 840 1030 760 1100 650 1200 600 1150 590 1030ZM725 290L755 280 875 380 765 450 705 410ZM640 340L700 330 725 310 725 370 680 380ZM1120 340L1170 370 1240 430 1240 500 1170 495 1130 480ZM1350 590L1390 530 1430 530 1568 600V640L1520 680 1460 710 1410 800 1340 680ZM1420 800L1550 730V900L1540 950 1440 890ZM1400 960L1440 890 1530 930 1550 1050 1510 1150 1450 1100ZM985 690L1010 680 1030 740 1040 820 1000 870 975 850 1000 800 970 740ZM1130 960L1150 920 1185 950 1170 1000 1190 1060 1170 1120 1130 1060ZM1215 1000L1260 950 1260 1120 1220 1060ZM0 60L70 60 85 160 60 180 20 170ZM1200 1230L1260 1220 1330 1320 1230 1390 1150 1280ZM330 1200L480 1260 640 1200 600 1420 420 1450 250 1420 370 1300Z',
    river:
      'M1130 0L1230 90 1340 160 1470 220 1568 310',
    canal:
      'M1060 510L1180 600 1250 660 1400 800M1060 560L1200 690M1240 670L1380 780M130 170L380 130',
    wide: 'M0 205L200 300 400 395 560 490 750 610 1040 780 1260 945M1450 1110L1568 1215',
    main:
      'M400 0L470 100 600 215 620 255 618 320 635 350 700 430 765 455 840 570 890 615 910 660 930 740 910 850 890 1080 900 1135 935 1160 990 1225 1035 1320 1110 1400 1115 1460M930 720L1030 450 1065 380 1080 310M1150 180L1260 290 1400 370 1568 480M910 840L780 930 590 1020 375 1135 230 1310 160 1380 140 1450M0 980L100 1220 160 1385M85 310L150 410 215 535M0 450L15 350 40 280 35 220M25 335L90 305M0 160L20 200',
    mid: 'M0 45L20 45 50 70 100 70M60 0L105 310M70 0L115 320 130 340 165 335 190 320M95 0L110 250',
    minor:
      'M50 250L55 310M65 240L120 320M100 210L200 290M60 210L85 190 90 120M570 0L575 35 600 40 610 0M610 0L615 70 650 140M605 100L685 65M620 10L650 15M660 0L720 160M680 30L700 25 730 45M750 0L765 40 800 50M610 210L700 175 745 160 780 120M765 135L745 160 770 205 785 165 765 135M800 90L860 150 955 290 985 320 1015 440M900 100L780 250 740 300 680 320 635 340M905 95L940 150 985 270 970 310M955 290L850 370 800 400M885 300L870 340M860 90L900 95M960 130L1010 165M395 140L470 80M400 175L460 110M600 215L540 275 410 385 245 520 190 580 270 670 375 740 445 850 425 900 425 970 480 1075M480 280L530 230M505 260L525 290M575 295L615 285M550 410L575 360 600 335M590 375L600 400M600 400L570 440M550 425L575 435M670 400L630 440 600 430M640 430L610 460M600 450L640 480M705 485L740 455M775 455L845 410 890 460 925 440 935 500 965 510 950 570M800 440L825 500 890 460M810 470L865 440M825 500L895 465 897 545 840 570M897 545L965 580M860 520L895 490M930 475L970 480M930 525L950 535M830 540L845 525M895 610L905 585M915 655L960 625M965 590L945 690M1030 450L1035 480 1065 500 1175 495M1060 0L1160 140 1150 170M1145 100L1175 70M1160 130L1210 95M1190 85L1225 105M1200 40L1290 0M1180 280L1200 285 1215 250M1275 290L1250 350 1290 385M1270 290L1365 310 1450 370 1568 470M1275 860L1340 850 1400 830 1420 780 1465 705 1520 680 1545 700H1568M1540 950L1568 920M915 830L1040 790 985 980 935 1040 890 1050 840 1070M935 1040L970 1070 1010 1090 1070 1155M590 1030L690 1050 800 1125 915 1080M800 1125L730 1155 680 1205M590 1035L620 1110 680 1210M695 1195L745 1245 820 1320M745 1245L770 1225M890 1140L880 1190 890 1240 700 1460M875 1250L920 1320 960 1350 1010 1280M1110 1380L1190 1325 1225 1325 1290 1275 1350 1340M1480 1210L1330 1350M1550 950L1545 1050 1510 1160 1450 1210M110 1220L175 1210M130 1270L165 1260 185 1290M0 850L55 825M0 980L95 935M0 560H20M165 400L205 412M0 1320L20 1420 65 1385 85 1420M160 1390L200 1450M0 1245L60 1260M1230 970L1260 1000M1240 980L1280 1030',
  },
]

const layers = [
  { key: 'shade', filled: true },
  { key: 'light', filled: true },
  { key: 'dark', filled: true },
  { key: 'canal', filled: false },
  { key: 'river', filled: false },
  { key: 'minor', filled: false },
  { key: 'mid', filled: false },
  { key: 'main', filled: false },
  { key: 'wide', filled: false },
] as const

const places: Place[] = [
  { name: 'Amandsberg', x: 321, y: 503, size: 'village' },
  { name: 'Destelbergen', x: 890, y: 605, size: 'town' },
  { name: 'Gentbrugge', x: 435, y: 813, size: 'town' },
  { name: 'Ledeberg', x: 257, y: 955, size: 'village' },
  { name: 'MOSCOU', x: 464, y: 1118, size: 'quarter' },
  { name: 'Heusden', x: 975, y: 1117, size: 'village' },
  { name: 'Melle', x: 973, y: 1610, size: 'town' },
  { name: 'ijnaarde', x: 122, y: 1659, size: 'village', anchor: 'end' },
  { name: 'Merelbeke', x: 289, y: 1778, size: 'town' },
]

const wetlands = [
  { x: 937, y: 853 },
  { x: 892, y: 882 },
  { x: 99, y: 1873 },
  { x: 12, y: 2042 },
]
</script>

<template>
  <div class="screen">
    <header class="status">
      <div class="status-side">
        <span class="clock">17:41</span>
        <svg class="locator" width="40" height="40" viewBox="0 0 40 40" aria-hidden="true">
          <path d="M36 1Q40 0 39 4L24 37Q22 40 21 36V20H4Q0 19 3 17Z" fill="#fff" />
        </svg>
      </div>
      <div class="status-side icons">
        <svg width="60" height="40" viewBox="0 0 60 40" aria-hidden="true">
          <rect x="1" y="24" width="10" height="14" rx="3" fill="#fff" />
          <rect x="17" y="17" width="10" height="21" rx="3" fill="#4c4c4c" />
          <rect x="33" y="9" width="10" height="29" rx="3" fill="#4c4c4c" />
          <rect x="49" y="1" width="10" height="37" rx="3" fill="#4c4c4c" />
        </svg>
        <svg width="52" height="40" viewBox="0 0 52 40" aria-hidden="true">
          <path d="M26 1Q41 1 51 11Q52 12 51 13L47 16Q46 17 45 16Q37 9 26 9T7 16Q6 17 5 16L1 13Q0 12 1 11Q11 1 26 1Z" fill="#fff" />
          <path d="M26 14Q36 14 42 20Q43 21 42 22L38 26Q37 27 36 26Q32 22 26 22T16 26Q15 27 14 26L10 22Q9 21 10 20Q16 14 26 14Z" fill="#fff" />
          <path d="M26 27Q30 27 33 30Q34 31 33 32L27 38Q26 39 25 38L19 32Q18 31 19 30Q22 27 26 27Z" fill="#fff" />
        </svg>
        <svg width="84" height="42" viewBox="0 0 84 42" aria-hidden="true">
          <rect x="2" y="3" width="73" height="37" rx="11" fill="none" stroke="#7d7d7d" stroke-width="3" />
          <path d="M79 16Q83 17 83 21.500T79 28Z" fill="#8d8d8d" />
          <path d="M13 8H48V35H13Q7 35 7 29V14Q7 8 13 8Z" fill="#34c759" />
          <path
            d="M44 2Q46 1 45 4L41 18H50Q52 18 51 20L34 41Q32 42 33 39L37 25H27Q25 25 26 23Z"
            fill="#fff"
            stroke="#1f1f1f"
            stroke-width="7"
            paint-order="stroke"
            stroke-linejoin="round"
          />
        </svg>
      </div>
    </header>

    <nav class="titlebar">
      <button class="icon-button" type="button" aria-label="Back">
        <svg width="60" height="60" viewBox="0 0 60 60" aria-hidden="true">
          <path d="M47 9L26 30 47 51" />
        </svg>
      </button>
      <h1>Where to?</h1>
      <button class="icon-button" type="button" aria-label="Close">
        <svg width="60" height="60" viewBox="0 0 60 60" aria-hidden="true">
          <path d="M18 14L50 46M50 14L18 46" />
        </svg>
      </button>
    </nav>

    <div class="segments" role="group" aria-label="Route">
      <button
        v-for="(route, index) in routes"
        :key="route"
        type="button"
        class="segment"
        :class="{ active: index === selected }"
        :aria-pressed="index === selected"
        @click="selected = index"
      >
        {{ route }}
      </button>
    </div>

    <section class="map" aria-label="Map">
      <svg class="canvas" viewBox="0 477 1284 1629">
        <rect y="477" width="1284" height="1629" fill="#242424" />
        <g v-for="layer in layers" :key="layer.key" :class="['layer', layer.key, { filled: layer.filled }]">
          <path
            v-for="tile in tiles"
            :key="tile.x + '-' + tile.y"
            :d="tile[layer.key]"
            :transform="`translate(${tile.x} ${tile.y}) scale(${642 / 1568} ${560 / 1568})`"
            vector-effect="non-scaling-stroke"
          />
        </g>
        <path
          v-for="spot in wetlands"
          :key="spot.x"
          :transform="`translate(${spot.x} ${spot.y})`"
          d="M-9 1H9M0 0V-10M-1 -1L-6 -6M1 -1L6 -6"
          fill="none"
          stroke="#a5aaa8"
          stroke-width="2"
        />
        <path
          d="M908 836H914M870 854H880M822 811H829M775 702L783 704M887 743L896 751M928 787H934M66 1712H74M48 1958H56M50 2090H58"
          stroke="#8d9291"
          stroke-width="2"
          fill="none"
        />
        <text
          v-for="place in places"
          :key="place.name"
          :x="place.x"
          :y="place.y"
          :class="['place', place.size]"
          :text-anchor="place.anchor ?? 'start'"
        >{{ place.name }}</text>

        <path
          class="route alternative"
          d="M387 916L404 1030 410 1053 462 1124V1155L575 1251 642 1380 657 1406 740 1473 788 1551 1057 1746 1046 1804 1065 1825 1068 1860 1090 1835 1133 1865"
        />
        <path
          class="route chosen"
          d="M110 628L163 650 199 698 254 703 271 727 290 718 319 832 312 849 664 1123 1001 1550 1044 1587 1104 1640 1086 1682 1161 1735 1180 1780 1136 1867 1171 1917 1164 1945"
        />

        <g>
          <clipPath id="flag-disc"><circle cx="96" cy="610" r="36" /></clipPath>
          <circle cx="96" cy="610" r="48" fill="#fff" />
          <path
            clip-path="url(#flag-disc)"
            fill="#0d0d0d"
            d="M56 570H76V590H56ZM96 570H116V590H96ZM76 590H96V610H76ZM116 590H136V610H116ZM56 610H76V630H56ZM96 610H116V630H96ZM76 630H96V650H76ZM116 630H136V650H116Z"
          />
        </g>
        <circle class="puck" cx="1044" cy="1594" r="33" fill="#fff" />
        <circle cx="1044" cy="1594" r="25" fill="#0d84ff" />
        <circle cx="1188" cy="1973" r="48" fill="#fff" />
        <circle cx="1188" cy="1973" r="24" fill="#5073ff" />
      </svg>

      <a class="brand" href="#mapbox">
        <svg width="56" height="56" viewBox="0 0 56 56" aria-hidden="true">
          <circle cx="28" cy="28" r="28" fill="#fff" />
          <path d="M14 42C13 23 21 11 33 11C41 11 46 17 46 24C46 36 34 43 14 42Z" fill="#1f1f1f" />
          <path d="M32 16L35 22 41 25 35 28 32 34 29 28 23 25 29 22Z" fill="#fff" />
        </svg>
        <span>mapbox</span>
      </a>
      <button class="info" type="button" aria-label="Map information">
        <svg width="66" height="66" viewBox="0 0 66 66" aria-hidden="true">
          <circle cx="33" cy="33" r="30" fill="none" stroke="#0d84ff" stroke-width="5" />
          <circle cx="33" cy="17" r="4" fill="#0d84ff" />
          <path d="M28 28H34V49M26 49H42" fill="none" stroke="#0d84ff" stroke-width="4" stroke-linecap="round" />
        </svg>
      </button>
      <div class="fade"></div>
    </section>

    <main class="summary">
      <div class="figures">
        <strong>49 min</strong>
        <span>11.3 km</span>
      </div>
      <p class="destination">Korenmarkt</p>
      <button class="send" type="button">Send to bike</button>
    </main>

    <div class="home-indicator"></div>
  </div>
</template>

<style>
body {
  background: #1f1f1f;
}
</style>

<style scoped>
.screen {
  display: flex;
  flex-direction: column;
  min-height: 100vh;
  overflow: hidden;
  background: #1f1f1f;
  color: #fff;
  font-family: Inter, 'Liberation Sans', sans-serif;
}

button {
  padding: 0;
  border: 0;
  background: none;
  color: inherit;
  font: inherit;
  cursor: pointer;
}

svg {
  display: block;
}

.status {
  display: flex;
  align-items: center;
  justify-content: space-between;
  height: 146px;
  padding: 0 80px 0 97px;
}

.status-side {
  display: flex;
  align-items: center;
  gap: 16px;
}

.icons {
  gap: 18px;
}

.clock {
  font-size: 51px;
  font-weight: 600;
}

.titlebar {
  display: flex;
  align-items: center;
  justify-content: space-between;
  height: 158px;
  padding: 0 64px;
}

.icon-button path {
  fill: none;
  stroke: #fff;
  stroke-width: 5px;
  stroke-linecap: round;
  stroke-linejoin: round;
}

h1 {
  margin: 0;
  font-size: 49px;
  font-weight: 700;
  line-height: 60px;
}

.segments {
  display: flex;
  height: 84px;
  margin: 29px 72px 48px;
  padding: 6px;
  border-radius: 27px;
  background: #343436;
}

.segment {
  flex: 1;
  border-radius: 22px;
  font-size: 42px;
}

.segment.active {
  background: #fff;
  box-shadow: 0 8px 24px rgba(0, 0, 0, 0.12);
  color: #0d0d0d;
}

.map {
  position: relative;
}

.canvas {
  width: 100%;
  height: auto;
}

.layer {
  fill: none;
  stroke-linejoin: round;
}

.filled {
  stroke: none;
}

.shade {
  fill: #212121;
}

.dark {
  fill: #1c1c1c;
}

.light {
  fill: #393939;
}

.river {
  stroke: #1c1c1c;
  stroke-width: 10px;
}

.canal {
  stroke: #1d1d1d;
  stroke-width: 4px;
}

.minor {
  stroke: #454545;
  stroke-width: 2px;
}

.mid {
  stroke: #484848;
  stroke-width: 3px;
}

.main {
  stroke: #505050;
  stroke-width: 5px;
}

.wide {
  stroke: #525252;
  stroke-width: 11px;
}

.place {
  fill: #ededed;
  stroke: #0b0b0b;
  stroke-width: 5px;
  stroke-linejoin: round;
  paint-order: stroke;
  font-family: Roboto, 'Liberation Sans', sans-serif;
}

.town {
  font-size: 41px;
}

.village {
  font-size: 35px;
}

.quarter {
  font-size: 31px;
  letter-spacing: 2px;
}

.route {
  fill: none;
  stroke-linejoin: round;
}

.alternative {
  stroke: #b0b0b0;
  stroke-width: 12px;
}

.chosen {
  stroke: #5b75f3;
  stroke-width: 23px;
}

.puck {
  filter: drop-shadow(0 0 8px rgba(0, 0, 0, 0.3));
}

.brand {
  position: absolute;
  bottom: 28px;
  left: 27px;
  display: flex;
  align-items: center;
  gap: 12px;
  opacity: 0.9;
  color: #fff;
  font-family: Lato, 'Liberation Sans', sans-serif;
  font-size: 50px;
  font-weight: 700;
  line-height: 56px;
  text-decoration: none;
  text-shadow: 0 0 6px #1f1f1f;
}

.brand span {
  padding-bottom: 4px;
}

.info {
  position: absolute;
  right: 30px;
  bottom: 29px;
}

.fade {
  position: absolute;
  right: 0;
  bottom: 0;
  left: 0;
  height: 124px;
  background: linear-gradient(rgba(31, 31, 31, 0), #1f1f1f);
  pointer-events: none;
}

.summary {
  display: flex;
  flex-direction: column;
  padding: 102px 72px 0;
}

.figures {
  display: flex;
  align-items: center;
  justify-content: space-between;
  height: 88px;
  font-size: 73px;
}

.figures strong {
  font-weight: 700;
}

.destination {
  margin: 45px 0 65px;
  font-size: 48px;
  line-height: 60px;
}

.send {
  height: 156px;
  padding-bottom: 2px;
  border-radius: 29px;
  background: #fff;
  color: #3b55f0;
  font-size: 49px;
  font-weight: 700;
}

.home-indicator {
  width: 460px;
  height: 15px;
  margin: auto auto 24px;
  border-radius: 8px;
  background: #fff;
}
</style>
